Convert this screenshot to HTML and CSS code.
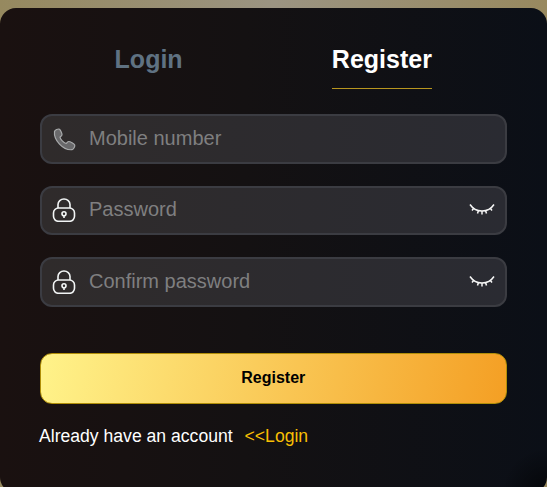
FILE: index.html
```html
<!DOCTYPE html>
<html lang="en">
<head>
<meta charset="utf-8">
<title>Register</title>
<link rel="stylesheet" href="styles.css">
</head>
<body>
<main class="card">
  <nav class="tabs">
    <div class="tab">Login</div>
    <div class="tab active">Register</div>
  </nav>
  <form class="form">
    <div class="field">
      <svg class="icon" viewBox="0 0 24 24"><path d="M2.500 4.500C3 3 6 1.500 7.500 2.200 8.500 3 10 6.500 10 7.800 10 9 8.500 9.500 8 10.200 8.500 12.500 11.500 15.800 14 16.500 15 16 15.500 14.500 16.800 14.500 18.200 14.500 22 16.800 22.700 18 23.200 19.500 21.500 22.200 20 22.700 11 23.500 1.500 13 2.500 4.500Z" fill="#69696b" stroke="#a9abac" stroke-width="1.200" stroke-linejoin="round"/></svg>
      <span class="placeholder">Mobile number</span>
    </div>
    <div class="field">
      <svg class="icon" viewBox="0 0 24 24" fill="none" stroke="#f2f5f5" stroke-width="1.600"><rect x="1.500" y="10" width="21" height="13.300" rx="5"/><path d="M6 10V6.500a6 5.500 0 0 1 12 0V10"/><circle cx="12" cy="15.800" r="2"/><path d="M12 17.800V20"/></svg>
      <span class="placeholder">Password</span>
      <svg class="eye" viewBox="0 0 26 14" fill="none" stroke="#f5f5f5" stroke-width="1.500"><path d="M1 1.500c3 4.500 7 6.500 12 6.500s9-2 12-6.500"/><path d="M5 5 3 7.500M9.500 7.400 8.500 10.500M13 8v3.500M16.500 7.400l1 3.100M21 5l2 2.500"/></svg>
    </div>
    <div class="field">
      <svg class="icon" viewBox="0 0 24 24" fill="none" stroke="#f2f5f5" stroke-width="1.600"><rect x="1.500" y="10" width="21" height="13.300" rx="5"/><path d="M6 10V6.500a6 5.500 0 0 1 12 0V10"/><circle cx="12" cy="15.800" r="2"/><path d="M12 17.800V20"/></svg>
      <span class="placeholder">Confirm password</span>
      <svg class="eye" viewBox="0 0 26 14" fill="none" stroke="#f5f5f5" stroke-width="1.500"><path d="M1 1.500c3 4.500 7 6.500 12 6.500s9-2 12-6.500"/><path d="M5 5 3 7.500M9.500 7.400 8.500 10.500M13 8v3.500M16.500 7.400l1 3.100M21 5l2 2.500"/></svg>
    </div>
    <button class="submit" type="button">Register</button>
    <p class="switch">Already have an account <a class="link">&lt;&lt;Login</a></p>
  </form>
</main>
</body>
</html>
```
FILE: styles.css
```css
* { box-sizing: border-box; }
html, body { margin: 0; height: 487px; overflow: hidden; }
body {
  padding-top: 8px;
  font-family: "Liberation Sans", Arial, sans-serif;
  background: linear-gradient(90deg, #96895f 0%, #9b9482 50%, #98895f 100%);
}
.card {
  height: 485px;
  padding: 30px 40.500px 0 40px;
  border-radius: 16px;
  background:
    radial-gradient(circle at 100% 100%, rgba(0, 0, 0, 0.6) 0, rgba(0, 0, 0, 0) 45px),
    linear-gradient(90deg, #1a1110 0%, #141112 45%, #0b0f17 100%);
}
.tabs { display: flex; justify-content: space-around; height: 76px; }
.tab {
  height: 51px;
  padding: 6px 0 0;
  font-size: 25px;
  line-height: 30px;
  font-weight: 700;
  color: #5f7282;
}
.tab.active { color: #fff; border-bottom: 1px solid #b8961f; }
.form { display: flex; flex-direction: column; }
.field {
  display: flex;
  align-items: center;
  height: 49.500px;
  margin-bottom: 22px;
  padding: 0 10px 0 10px;
  border: 2px solid #3b3c42;
  border-radius: 12px;
  background: linear-gradient(90deg, #2f2b2b 0%, #2a2b32 100%);
}
.icon { width: 24px; height: 24px; flex: none; }
.placeholder { margin-left: 13px; padding-bottom: 1px; flex: 1; font-size: 20px; color: #7f7f80; }
.eye { width: 26px; height: 14px; flex: none; }
.submit {
  height: 51px;
  margin-top: 24.500px;
  padding-bottom: 3px;
  border: 1px solid #b08e08;
  border-radius: 12px;
  font: 700 16px "Liberation Sans", Arial, sans-serif;
  color: #000;
  background: linear-gradient(100deg, #fff38a 0%, #f49f24 100%);
}
.switch { margin: 21px 0 0 -1px; font-size: 17.600px; line-height: 22px; color: #fff; }
.link { margin-left: 7px; color: #f8bf04; }
```
